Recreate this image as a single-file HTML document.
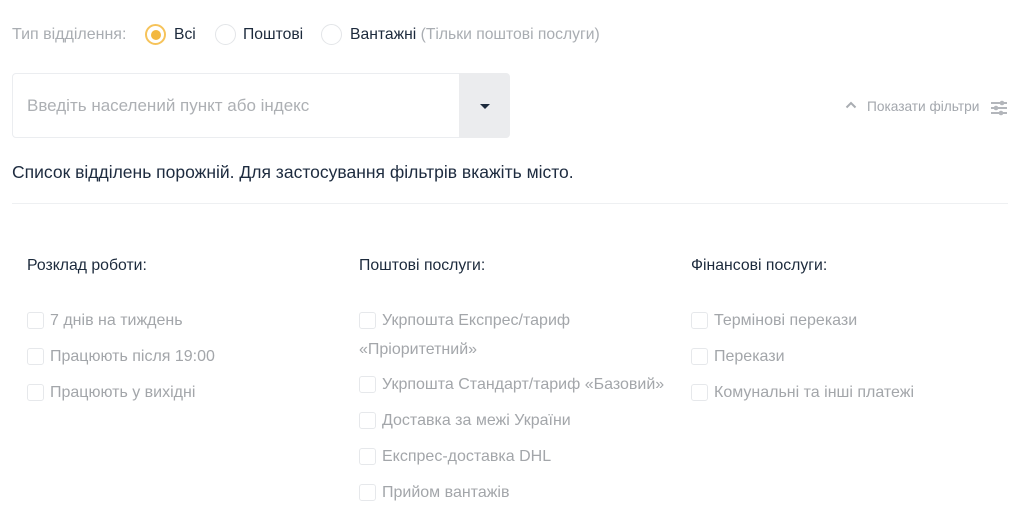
<!DOCTYPE html>
<html><head><meta charset="utf-8"><style>
body{margin:0;width:1024px;height:524px;background:#fff;font-family:"Liberation Sans",sans-serif;overflow:hidden;position:relative}
.a{position:absolute;white-space:nowrap}
.rad{position:absolute;width:19px;height:19px;border:1px solid #e3e5e8;border-radius:50%;top:24px}
.cb{position:absolute;left:0;top:6px;width:17px;height:17px;border:1px solid #e6e8eb;border-radius:3px;box-sizing:border-box}
.col{position:absolute;top:256px;width:330px}
.col h4{margin:0 0 30px;font-size:15.8px;font-weight:normal;color:#1c2a3c;line-height:20px}
.it{position:relative;padding-left:23px;font-size:16px;color:#a3a6aa;line-height:29px;margin-bottom:7px}
</style></head><body>
<div class="a" style="left:12px;top:26px;font-size:16px;color:#a9adb2">Тип відділення:</div>
<div class="rad" style="left:145px;border:2px solid #f6c35a;width:17px;height:17px"><div style="position:absolute;left:3.5px;top:3.5px;width:10px;height:10px;border-radius:50%;background:#f3b83f"></div></div>
<div class="a" style="left:174px;top:26px;font-size:15.7px;color:#1c2a3c">Всі</div>
<div class="rad" style="left:215px"></div>
<div class="a" style="left:243px;top:26px;font-size:15.7px;color:#1c2a3c">Поштові</div>
<div class="rad" style="left:321px"></div>
<div class="a" style="left:350px;top:26px;font-size:15.7px;color:#1c2a3c">Вантажні <span style="color:#a9adb2">(Тільки поштові послуги)</span></div>
<div class="a" style="left:12px;top:73px;width:497px;height:65px;border:1px solid #ebedf0;border-radius:4px;box-sizing:border-box"></div>
<div class="a" style="left:459px;top:73px;width:51px;height:65px;background:#ebecee;border-radius:0 4px 4px 0"></div>
<div class="a" style="left:480px;top:104px;width:0;height:0;border-left:5px solid transparent;border-right:5px solid transparent;border-top:5px solid #1c2a3c"></div>
<div class="a" style="left:27px;top:96px;font-size:17px;color:#adb0b4">Введіть населений пункт або індекс</div>
<svg class="a" style="left:845px;top:101px" width="12" height="8" viewBox="0 0 12 8"><path d="M1.5 6.5L6 2l4.5 4.5" fill="none" stroke="#a9adb2" stroke-width="2"/></svg>
<div class="a" style="left:867px;top:99px;font-size:13.7px;color:#a3a7ad">Показати фільтри</div>
<svg class="a" style="left:990px;top:100px" width="18" height="16" viewBox="0 0 18 16"><g stroke="#b3b6bb" stroke-width="2"><path d="M1 3h16M1 8h16M1 13h16"/></g><g fill="#b3b6bb"><circle cx="12" cy="3" r="2.3"/><circle cx="6" cy="8" r="2.3"/><circle cx="11" cy="13" r="2.3"/></g></svg>
<div class="a" style="left:12px;top:162px;font-size:17.5px;color:#1d2b3f">Список відділень порожній. Для застосування фільтрів вкажіть місто.</div>
<div class="a" style="left:12px;top:203px;width:996px;height:1px;background:#eef0f2"></div>
<div class="col" style="left:27px"><h4>Розклад роботи:</h4>
<div class="it"><i class="cb"></i>7 днів на тиждень</div>
<div class="it"><i class="cb"></i>Працюють після 19:00</div>
<div class="it"><i class="cb"></i>Працюють у вихідні</div></div>
<div class="col" style="left:359px"><h4>Поштові послуги:</h4>
<div class="it" style="white-space:normal;width:300px;margin-bottom:6px"><i class="cb"></i>Укрпошта Експрес/тариф<br><span style="margin-left:-23px">«Пріоритетний»</span></div>
<div class="it"><i class="cb"></i>Укрпошта Стандарт/тариф «Базовий»</div>
<div class="it"><i class="cb"></i>Доставка за межі України</div>
<div class="it"><i class="cb"></i>Експрес-доставка DHL</div>
<div class="it"><i class="cb"></i>Прийом вантажів</div></div>
<div class="col" style="left:691px"><h4>Фінансові послуги:</h4>
<div class="it"><i class="cb"></i>Термінові перекази</div>
<div class="it"><i class="cb"></i>Перекази</div>
<div class="it"><i class="cb"></i>Комунальні та інші платежі</div></div>
</body></html>
